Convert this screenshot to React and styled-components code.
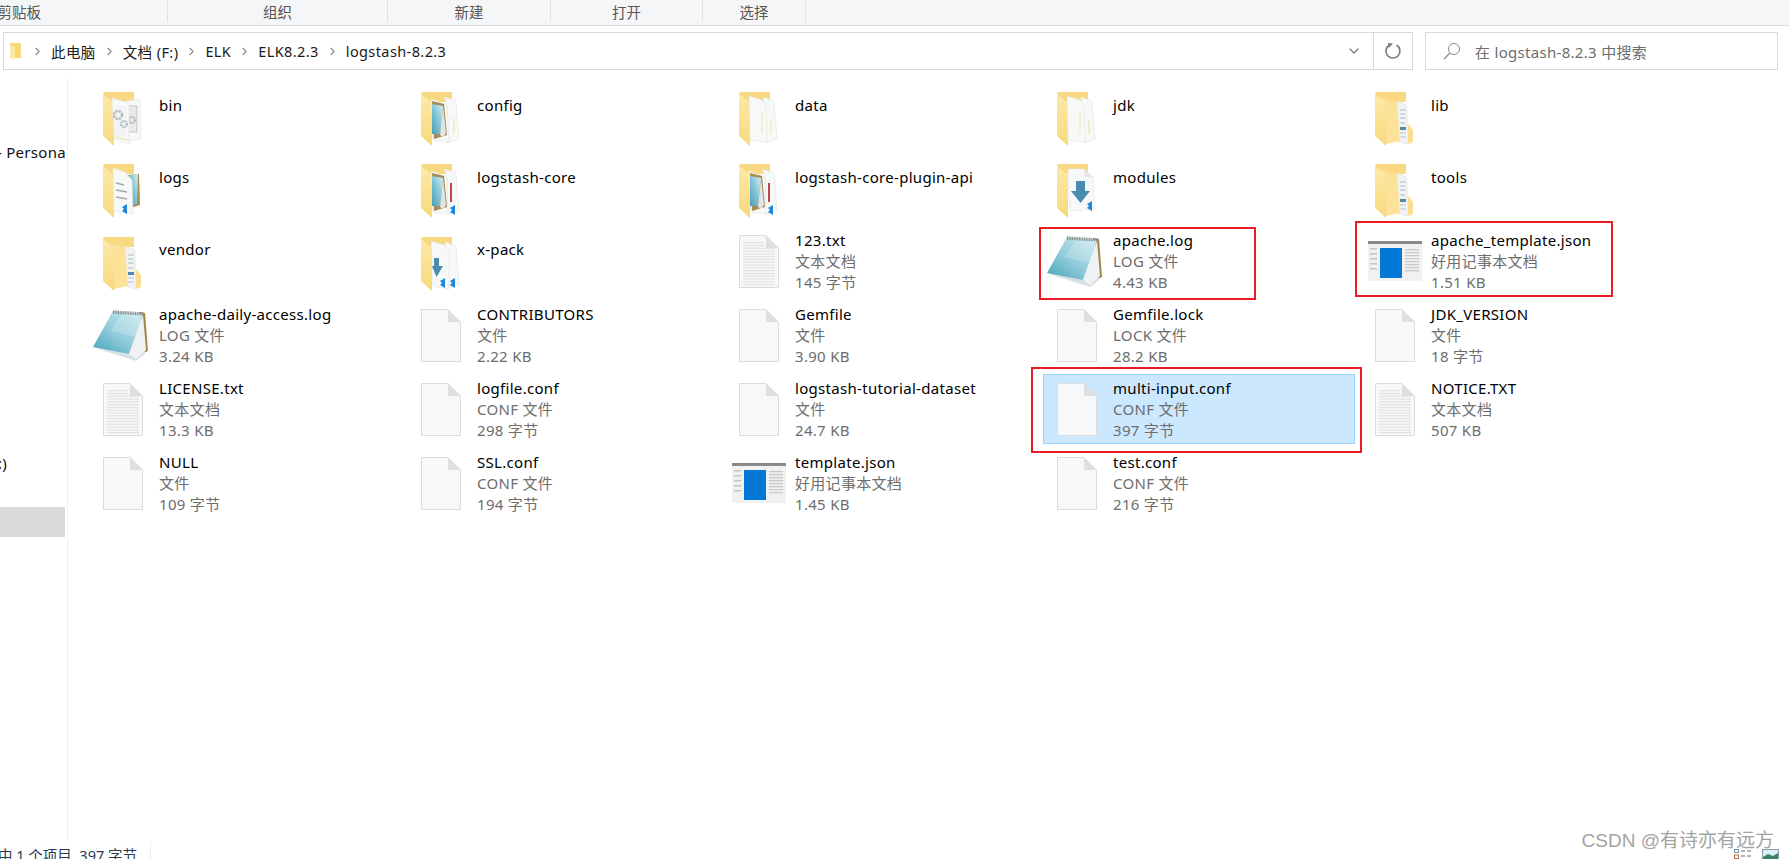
import React from "react";
import styled, { createGlobalStyle } from "styled-components";
import { ChevronRight, ChevronDown } from "lucide-react";

const UI_FONT = `"Noto Sans", "Noto Sans CJK SC", sans-serif`;

const GlobalStyle = createGlobalStyle`
  html, body {
    margin: 0;
    padding: 0;
    background: #fff;
  }
  body {
    font-family: ${UI_FONT};
    overflow: hidden;
  }
`;

const Window = styled.div`
  position: relative;
  width: 1789px;
  height: 859px;
  display: flex;
  flex-direction: column;
  overflow: hidden;
  background: #fff;
`;

const Ribbon = styled.div`
  flex: none;
  height: 25px;
  display: grid;
  grid-template-columns: 168px 220px 163px 152px 103px;
  background: #f5f6f7;
  border-bottom: 1px solid #dadbdc;
`;

const RibbonGroup = styled.div`
  height: 22px;
  display: flex;
  align-items: center;
  justify-content: ${(p) => (p.$clipped ? "flex-end" : "center")};
  padding-right: ${(p) => (p.$clipped ? "126px" : "0")};
  border-right: 1px solid #e1e2e3;
  font-size: 14.5px;
  color: #555;
  white-space: nowrap;
`;

const NavRow = styled.div`
  flex: none;
  display: flex;
  gap: 12px;
  padding: 6px 11px 0 3px;
`;

const AddressBar = styled.div`
  width: 1410px;
  height: 38px;
  box-sizing: border-box;
  display: flex;
  align-items: center;
  border: 1px solid #d9d9d9;
  padding-left: 5px;
`;

const Crumbs = styled.div`
  flex: 1;
  display: flex;
  align-items: center;
  gap: 7px;
  font-size: 14.5px;
  letter-spacing: 0.4px;
  color: #1a1a1a;
  white-space: nowrap;
`;

const CrumbFolder = styled.svg`
  width: 14px;
  height: 18px;
  margin-right: 1px;
`;

const Arrow = styled.span`
  display: flex;
  color: #8b8b8b;
`;

const DropButton = styled.div`
  width: 38px;
  display: flex;
  justify-content: center;
  color: #7a7a7a;
`;

const RefreshButton = styled.div`
  width: 38px;
  height: 100%;
  display: flex;
  align-items: center;
  justify-content: center;
  border-left: 1px solid #d9d9d9;
`;

const SearchBox = styled.div`
  width: 353px;
  height: 38px;
  box-sizing: border-box;
  display: flex;
  align-items: center;
  gap: 14px;
  padding-left: 17px;
  border: 1px solid #d9d9d9;
  font-size: 15px;
  letter-spacing: 0.3px;
  color: #6d6d6d;
`;

const Body = styled.div`
  flex: 1;
  min-height: 0;
  display: flex;
  margin-top: 8px;
`;

const Sidebar = styled.div`
  flex: none;
  width: 67px;
  display: flex;
  flex-direction: column;
  border-right: 1px solid #f0f0f0;
  overflow: hidden;
`;

const SideRow = styled.div`
  flex: none;
  height: 30px;
  margin-top: ${(p) => p.$top}px;
  display: flex;
  align-items: center;
  justify-content: flex-end;
  padding-right: ${(p) => p.$pad || 0}px;
  width: ${(p) => (p.$wide ? "65px" : "auto")};
  background: ${(p) => (p.$active ? "#d9d9d9" : "transparent")};
  font-size: 15px;
  letter-spacing: 0.3px;
  color: #111;
  white-space: nowrap;
`;

const Files = styled.div`
  flex: 1;
  display: grid;
  grid-template-columns: repeat(5, 312px);
  grid-template-rows: 68px 68px 70px 70px 70px 70px;
  column-gap: 6px;
  row-gap: 4px;
  align-content: start;
  padding: 4px 0 0 21px;
`;

const Tile = styled.div`
  position: relative;
  display: flex;
  box-sizing: border-box;
  background: ${(p) => (p.$selected ? "#cce8ff" : "transparent")};
  outline: ${(p) => (p.$selected ? "1px solid #99d1ff" : "none")};
  outline-offset: -1px;
`;

const IconCell = styled.div`
  flex: none;
  width: 68px;
  display: flex;
  align-items: center;
  justify-content: center;
`;

const FolderSvg = styled.svg`
  width: 40px;
  height: 54px;
  margin-top: 6px;
`;

const PageSvg = styled.svg`
  width: 40px;
  height: 53px;
`;

const NoteSvg = styled.svg`
  width: 56px;
  height: 53px;
  margin-right: 5px;
`;

const WindowSvg = styled.svg`
  width: 54px;
  height: 40px;
`;

const TileText = styled.div`
  margin-left: 2px;
  padding-top: ${(p) => (p.$single ? "13px" : "4px")};
  font-size: 15px;
  letter-spacing: 0.3px;
  line-height: 21px;
  white-space: nowrap;
`;

const Name = styled.div`
  color: #000;
`;

const Meta = styled.div`
  color: #6d6d6d;
`;

const RedMark = styled.div`
  position: absolute;
  left: ${(p) => p.$box.left}px;
  top: ${(p) => p.$box.top}px;
  width: ${(p) => p.$box.width}px;
  height: ${(p) => p.$box.height}px;
  box-sizing: border-box;
  border: 2px solid #ed1c24;
  pointer-events: none;
`;

const StatusBar = styled.div`
  flex: none;
  height: 17px;
  display: flex;
  align-items: flex-start;
`;

const StatusText = styled.div`
  width: 151px;
  box-sizing: border-box;
  display: flex;
  justify-content: flex-end;
  padding: 3px 13px 0 0;
  border-right: 1px solid #eee;
  height: 17px;
  font-size: 14.5px;
  line-height: 20px;
  color: #2b3a55;
  white-space: nowrap;
  overflow: hidden;
`;

const ViewSwitch = styled.div`
  margin-left: auto;
  margin-right: 10px;
  padding-top: 7px;
  display: flex;
  gap: 11px;
`;

const Watermark = styled.div`
  position: absolute;
  right: 15px;
  bottom: 5px;
  font-family: "Liberation Sans", "Noto Sans CJK SC", sans-serif;
  font-size: 19px;
  line-height: 26px;
  color: #a3a3a3;
  white-space: nowrap;
`;

const FolderBase = () => (
  <>
    <defs>
      <linearGradient id="flap" x1="0" y1="0" x2="0" y2="1">
        <stop offset="0" stopColor="#fdeaa6" />
        <stop offset="1" stopColor="#f8d87c" />
      </linearGradient>
      <linearGradient id="shot" x1="1" y1="0" x2="0" y2="1">
        <stop offset="0" stopColor="#d8f0f5" />
        <stop offset="0.5" stopColor="#82c6d6" />
        <stop offset="1" stopColor="#4d9db3" />
      </linearGradient>
    </defs>
    <path d="M0 1 L2 0 H31 V10 H0Z" fill="#f8d880" />
  </>
);

const Flap = () => <path d="M0 2 L11 11 V54 L0 44Z" fill="url(#flap)" />;

const Badge = ({ x, y }) => (
  <path
    d={`M${x} ${y + 3} L${x + 5} ${y} V${y + 10} L${x} ${y + 7} L${x + 2} ${y + 5}Z`}
    fill="#1f86d8"
  />
);

const Sheet = ({ points }) => (
  <polygon points={points} fill="#f7f8f8" stroke="#e3e3e3" strokeWidth="0.6" />
);

const Shot = () => (
  <>
    <polygon points="11,9 23,12 26,43 13,47" fill="#a98a4f" />
    <polygon points="11,12 22,14 19,42 11,42" fill="url(#shot)" />
    <polygon points="19,43 22,14 25,41 22,45" fill="#dfe5e8" />
  </>
);

const FOLDER_ART = {
  gear: () => (
    <>
      <Sheet points="23,9 37,7 38,47 26,49" />
      <rect x="25" y="14" width="9" height="26" fill="#eaeaea" stroke="#a8a8a8" strokeWidth="0.6" />
      <circle cx="29" cy="28" r="3" fill="none" stroke="#a8b3bd" strokeWidth="2" strokeDasharray="1.5 1" />
      <Flap />
      <Sheet points="9,6 26,11 26,52 11,47" />
      <rect x="11" y="14" width="13" height="30" fill="#f3f3f3" />
      <circle cx="15" cy="23" r="4" fill="none" stroke="#a8b3bd" strokeWidth="2.4" strokeDasharray="2 1.2" />
      <circle cx="21" cy="32" r="3" fill="none" stroke="#a8b3bd" strokeWidth="2" strokeDasharray="1.5 1" />
      <path d="M12 45 L25 48" stroke="#f2e49a" strokeWidth="1" />
    </>
  ),
  shot: () => (
    <>
      <Sheet points="24,5 35,9 38,47 27,51" />
      <path d="M33 26 V42" stroke="#f0e2a0" strokeWidth="1" />
      <Flap />
      <Sheet points="10,7 26,13 28,50 12,48" />
      <Shot />
    </>
  ),
  core: () => (
    <>
      <Sheet points="24,5 35,9 38,47 27,51" />
      <rect x="29" y="19" width="2" height="19" fill="#c2444a" />
      <Badge x={29} y={41} />
      <Flap />
      <Sheet points="10,7 26,13 27,50 12,48" />
      <Shot />
    </>
  ),
  plain: () => (
    <>
      <Sheet points="24,5 35,9 38,47 27,51" />
      <path d="M32 27 V42" stroke="#f0e2a0" strokeWidth="1" />
      <Flap />
      <Sheet points="10,4 23,8 27,13 28,50 11,48" />
      <path d="M23 20 V41" stroke="#f3e6a8" strokeWidth="1" />
    </>
  ),
  logs: () => (
    <>
      <polygon points="25,11 36,10 37,41 27,44" fill="#a98a4f" />
      <polygon points="27,11 35,10 34,40 27,42" fill="url(#shot)" />
      <Flap />
      <Sheet points="10,4 22,8 29,16 30,50 11,47" />
      <path d="M13 19 L21 21 M13 26 L24 28 M13 33 L24 35" stroke="#a5a9ad" strokeWidth="1.4" />
      <Badge x={19} y={40} />
    </>
  ),
  arrow: () => (
    <>
      <Flap />
      <Sheet points="11,5 27,5 36,13 38,45 13,47" />
      <path d="M27 5 L28 12 L36 13" fill="#e6e6e6" stroke="#ddd" strokeWidth="0.5" />
      <path d="M19 17 H28 V27 H33 L23.5 39 L14 27 H19Z" fill="#4a8bae" />
      <Badge x={30} y={37} />
    </>
  ),
  xpack: () => (
    <>
      <Sheet points="24,5 35,9 38,47 27,51" />
      <Badge x={29} y={41} />
      <Flap />
      <Sheet points="10,4 23,8 28,14 28,52 12,49" />
      <path d="M13 21 H18 V29 H22 L15.5 40 L11 29 H13Z" fill="#4a8bae" />
      <Badge x={19} y={41} />
    </>
  ),
  narrow: () => (
    <>
      <polygon points="22,9 32,13 33,52 24,50" fill="#f1f2f2" stroke="#e0e0e0" strokeWidth="0.5" />
      <path d="M25 18 H31 M25 22 H30 M25 26 H31 M25 31 H30" stroke="#a9bdcc" strokeWidth="1" />
      <rect x="25" y="35" width="6" height="3" fill="#4e88ad" />
      <path d="M25 41 H31 M25 45 H31" stroke="#bcc5cc" strokeWidth="1" />
      <polygon points="33,32 38,38 38,50 33,52" fill="#fbdf8f" />
      <polygon points="5,6 22,10 25,49 11,52 9,46" fill="#fbe298" />
      <Flap />
    </>
  ),
};

const FolderIcon = ({ art }) => {
  const Art = FOLDER_ART[art];
  return (
    <FolderSvg viewBox="0 0 40 54">
      <FolderBase />
      <Art />
    </FolderSvg>
  );
};

const PageIcon = ({ lines }) => (
  <PageSvg viewBox="0 0 40 53">
    <path d="M.5 .5 H27 L39.5 13 V52.5 H.5Z" fill="#f7f8f9" stroke="#dcdcdc" />
    {lines &&
      Array.from({ length: 16 }, (_, i) => (
        <rect key={i} x="4" y={7 + i * 2.8} width={i < 2 ? 21 : 32} height="1.3" fill="#e2e3e5" />
      ))}
    <path d="M27 .5 V13 H39.5Z" fill="#dedfe0" />
  </PageSvg>
);

const NoteIcon = () => (
  <NoteSvg viewBox="0 0 56 53">
    <defs>
      <linearGradient id="pad" x1="0.9" y1="0" x2="0.1" y2="1">
        <stop offset="0" stopColor="#c6e8ef" />
        <stop offset="0.55" stopColor="#8fcbd9" />
        <stop offset="1" stopColor="#4ea6bd" />
      </linearGradient>
    </defs>
    <polygon points="46,3 52,4 55,42 46,46" fill="#a58545" />
    <polygon points="2,39 43,52 52,45 48,8 30,30" fill="#d9e0e4" />
    <polygon points="0,38 20,2 50,5 36,45" fill="url(#pad)" />
    <polygon points="30,4 50,5 42,28 17,22" fill="#fff" opacity="0.2" />
    <polygon points="36,45 50,6 53,41 43,50" fill="#eef2f4" />
    <path d="M20 3 L51 5" stroke="#8c8c8c" strokeWidth="3.4" strokeDasharray="1 .7" />
  </NoteSvg>
);

const WindowIcon = () => (
  <WindowSvg viewBox="0 0 54 40">
    <rect width="54" height="40" rx="1" fill="#f1f1f1" />
    <rect width="54" height="3" fill="#8a8a8a" />
    {[7, 12, 17, 22, 27].map((y) => (
      <rect key={y} x="2" y={y} width="7" height="1.5" fill="#c4c4c4" />
    ))}
    <rect x="12" y="7" width="22" height="30" fill="#0478d7" />
    {[8, 11, 14, 17, 20, 23, 26, 29].map((y) => (
      <rect key={y} x="37" y={y} width="14" height="1.3" fill="#c9c9c9" />
    ))}
  </WindowSvg>
);

const renderIcon = (item) => {
  if (item.folder) return <FolderIcon art={item.folder} />;
  if (item.icon === "note") return <NoteIcon />;
  if (item.icon === "window") return <WindowIcon />;
  return <PageIcon lines={item.icon === "lines"} />;
};

const items = [
  { name: "bin", folder: "gear" },
  { name: "config", folder: "shot" },
  { name: "data", folder: "plain" },
  { name: "jdk", folder: "plain" },
  { name: "lib", folder: "narrow" },
  { name: "logs", folder: "logs" },
  { name: "logstash-core", folder: "core" },
  { name: "logstash-core-plugin-api", folder: "core" },
  { name: "modules", folder: "arrow" },
  { name: "tools", folder: "narrow" },
  { name: "vendor", folder: "narrow" },
  { name: "x-pack", folder: "xpack" },
  { name: "123.txt", type: "文本文档", size: "145 字节", icon: "lines" },
  {
    name: "apache.log",
    type: "LOG 文件",
    size: "4.43 KB",
    icon: "note",
    mark: { left: -4, top: 1, width: 217, height: 73 },
  },
  {
    name: "apache_template.json",
    type: "好用记事本文档",
    size: "1.51 KB",
    icon: "window",
    mark: { left: -6, top: -5, width: 258, height: 76 },
  },
  { name: "apache-daily-access.log", type: "LOG 文件", size: "3.24 KB", icon: "note" },
  { name: "CONTRIBUTORS", type: "文件", size: "2.22 KB" },
  { name: "Gemfile", type: "文件", size: "3.90 KB" },
  { name: "Gemfile.lock", type: "LOCK 文件", size: "28.2 KB" },
  { name: "JDK_VERSION", type: "文件", size: "18 字节" },
  { name: "LICENSE.txt", type: "文本文档", size: "13.3 KB", icon: "lines" },
  { name: "logfile.conf", type: "CONF 文件", size: "298 字节" },
  { name: "logstash-tutorial-dataset", type: "文件", size: "24.7 KB" },
  {
    name: "multi-input.conf",
    type: "CONF 文件",
    size: "397 字节",
    selected: true,
    mark: { left: -12, top: -7, width: 331, height: 86 },
  },
  { name: "NOTICE.TXT", type: "文本文档", size: "507 KB", icon: "lines" },
  { name: "NULL", type: "文件", size: "109 字节" },
  { name: "SSL.conf", type: "CONF 文件", size: "194 字节" },
  { name: "template.json", type: "好用记事本文档", size: "1.45 KB", icon: "window" },
  { name: "test.conf", type: "CONF 文件", size: "216 字节" },
];

const crumbs = ["此电脑", "文档 (F:)", "ELK", "ELK8.2.3", "logstash-8.2.3"];

const App = () => {
  return (
    <Window>
      <GlobalStyle />
      <Ribbon>
        <RibbonGroup $clipped>剪贴板</RibbonGroup>
        <RibbonGroup>组织</RibbonGroup>
        <RibbonGroup>新建</RibbonGroup>
        <RibbonGroup>打开</RibbonGroup>
        <RibbonGroup>选择</RibbonGroup>
      </Ribbon>

      <NavRow>
        <AddressBar>
          <Crumbs>
            <CrumbFolder viewBox="0 0 14 18">
              <path d="M1 1 H12 V16 H1Z" fill="#f8d775" />
              <path d="M1 3 L6 5 V18 L1 15Z" fill="#fce9a9" />
            </CrumbFolder>
            {crumbs.map((crumb) => (
              <React.Fragment key={crumb}>
                <Arrow>
                  <ChevronRight size={13} strokeWidth={2} />
                </Arrow>
                <span>{crumb}</span>
              </React.Fragment>
            ))}
          </Crumbs>
          <DropButton>
            <ChevronDown size={16} strokeWidth={2} />
          </DropButton>
          <RefreshButton>
            <svg width="18" height="18" viewBox="0 0 18 18" fill="none">
              <path d="M5 3.2 A7 7 0 1 0 12.5 3" stroke="#7d7d7d" strokeWidth="1.7" />
              <path d="M4 1 L9 1.5 L5 6Z" fill="#7d7d7d" />
            </svg>
          </RefreshButton>
        </AddressBar>
        <SearchBox>
          <svg width="18" height="18" viewBox="0 0 18 18" fill="none">
            <circle cx="11" cy="7" r="5.5" stroke="#8a8a8a" strokeWidth="1" />
            <path d="M7 11 L1 17" stroke="#8a8a8a" strokeWidth="1.2" />
          </svg>
          <span>在 logstash-8.2.3 中搜索</span>
        </SearchBox>
      </NavRow>

      <Body>
        <Sidebar>
          <SideRow $top={59} $pad={1}>- Persona</SideRow>
          <SideRow $top={281} $pad={60}>:)</SideRow>
          <SideRow $top={29} $wide $active />
        </Sidebar>
        <Files>
          {items.map((item) => (
            <Tile key={item.name} $selected={item.selected}>
              <IconCell>{renderIcon(item)}</IconCell>
              <TileText $single={!item.type}>
                <Name>{item.name}</Name>
                {item.type && <Meta>{item.type}</Meta>}
                {item.size && <Meta>{item.size}</Meta>}
              </TileText>
              {item.mark && <RedMark $box={item.mark} />}
            </Tile>
          ))}
        </Files>
      </Body>

      <StatusBar>
        <StatusText>中 1 个项目&nbsp;&nbsp;397 字节</StatusText>
        <ViewSwitch>
          <svg width="17" height="10" viewBox="0 0 17 10">
            <rect x="0.5" y="0.5" width="4" height="3" fill="none" stroke="#7a93b0" />
            <rect x="0.5" y="6" width="4" height="3.5" fill="none" stroke="#c0714a" />
            <path d="M7 2 H11 M13 2 H17 M7 7 H11 M13 7 H17" stroke="#666" />
          </svg>
          <svg width="17" height="10" viewBox="0 0 17 10">
            <rect x="0.5" y="0.5" width="16" height="10" fill="#d8eef8" stroke="#8c9aa5" />
            <path d="M1 8 L6 5 L11 7 L16 4 V10 H1Z" fill="#3f7f6b" />
          </svg>
        </ViewSwitch>
      </StatusBar>

      <Watermark>CSDN @有诗亦有远方</Watermark>
    </Window>
  );
};

export default App;
